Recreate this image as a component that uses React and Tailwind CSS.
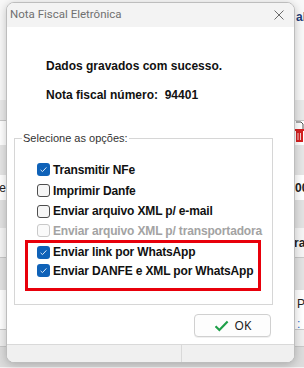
import React from 'react'

const sans = { fontFamily: '"Liberation Sans", Arial, sans-serif' }

const Box = ({ checked, disabled }) =>
  checked ? (
    <span className="w-[13px] h-[13px] rounded-[3px] bg-[#0f62b8] flex items-center justify-center shrink-0">
      <svg width="9" height="9" viewBox="0 0 9 9">
        <path d="M1.6 4.9 L3.5 6.6 L7.4 2.4" stroke="#dbe9f7" strokeWidth="1" fill="none" />
      </svg>
    </span>
  ) : (
    <span
      className={
        disabled
          ? 'w-[13px] h-[13px] rounded-[3px] border border-[#c9c9c9] bg-[#fafafa] shrink-0'
          : 'w-[13px] h-[13px] rounded-[3px] border border-[#4d4d4d] bg-[#f6f6f6] shrink-0'
      }
    />
  )

const Option = ({ label, checked, disabled, h }) => (
  <div className={`flex items-center gap-[3px] ${h}`}>
    <Box checked={checked} disabled={disabled} />
    <span
      className={
        disabled
          ? 'text-[12px] font-bold text-[#a3a3a3] whitespace-nowrap tracking-[-0.15px]'
          : 'text-[12px] font-bold text-[#111] whitespace-nowrap tracking-[-0.15px]'
      }
    >
      {label}
    </span>
  </div>
)

const BgRow = ({ className, left, right }) => (
  <div className={`flex justify-between items-center text-[12px] ${className}`}>
    <span className="w-[6px] overflow-hidden flex justify-end">{left}</span>
    <span className="w-[10px] overflow-hidden">{right}</span>
  </div>
)

export default function App() {
  return (
    <div className="relative w-[304px] h-[368px] overflow-hidden bg-[#f3f3f3]" style={sans}>
      {/* application behind the dialog */}
      <div className="flex flex-col">
        <BgRow
          className="h-[100px] bg-[#f8f8f8] items-start pt-[8px]"
          right={<span className="font-bold text-[#1f3f7a] pl-[2px]">al</span>}
        />
        <BgRow className="h-[21px] bg-[#e9e9e9] border-b border-[#c8c8c8]" />
        <BgRow
          className="h-[24px] bg-white"
          right={
            <svg width="10" height="24" viewBox="0 0 10 24">
              <path d="M2 1 H7 L9 3 V8" stroke="#555" fill="none" />
              <rect x="2" y="10" width="7" height="11" fill="#d42020" />
              <path d="M4 12 V19 M6.5 12 V19" stroke="#fff" strokeWidth="0.8" />
              <rect x="1" y="8" width="9" height="2" fill="#d42020" />
            </svg>
          }
        />
        <BgRow className="h-[30px] bg-[#e6e6e6]" />
        <BgRow
          className="h-[25px] bg-white"
          left={<span className="text-[#222]">De</span>}
          right={<span className="font-bold text-[#222] pl-[1px]">00</span>}
        />
        <BgRow className="h-[28px] bg-[#e2e2e2]" />
        <BgRow
          className="h-[30px] bg-[#f5f5f5] border-b border-[#c8c8c8]"
          right={<span className="font-bold text-[#222]">ra</span>}
        />
        <BgRow className="h-[32px] bg-[#e3e3e3]" />
        <BgRow
          className="h-[28px] bg-white"
          right={<span className="block border-l border-[#bbb] pl-[2px] text-[#222]">P</span>}
        />
        <BgRow
          className="h-[12px] bg-white border-b border-[#c8c8c8]"
          right={<span className="text-[#2a6bd1] pl-[3px]">:</span>}
        />
        <BgRow className="h-[17px] bg-[#eeeeee] border-b border-[#c8c8c8]" />
        <BgRow className="h-[20px] bg-[#dcdcdc]" />
      </div>

      {/* dialog window */}
      <div className="absolute left-[6px] top-[2px] w-[289px] h-[361px] rounded-[8px] border border-[#bdbdbd] bg-white overflow-hidden flex flex-col shadow-[0_2px_10px_rgba(0,0,0,0.22)]">
        <div className="h-[24px] shrink-0 bg-[#f3f3f3] flex items-center justify-between pl-[3px] pr-[10px]">
          <span
            className="text-[11.5px] text-[#707070]"
            style={{ fontFamily: 'Roboto, "Noto Sans", sans-serif' }}
          >
            Nota Fiscal Eletrônica
          </span>
          <svg width="10" height="10" viewBox="0 0 10 10">
            <path d="M0.5 0.5 L9.5 9.5 M9.5 0.5 L0.5 9.5" stroke="#6a6a6a" strokeWidth="1" />
          </svg>
        </div>

        <div className="flex-1 flex flex-col">
          <div className="pl-[39px] pt-[32px] text-[12px] font-bold text-[#111] leading-[14px]">
            <p>Dados gravados com sucesso.</p>
            <p className="mt-[15px] whitespace-pre">Nota fiscal número:  94401</p>
          </div>

          <fieldset className="ml-[7px] mt-[30px] w-[259px] border border-[#d6d6d6] pb-[13px]">
            <legend className="ml-[7px] px-[1px] text-[11px] leading-[13px] text-[#333]">
              Selecione as opções:
            </legend>
            <div className="flex flex-col pt-[14px] pl-[22px]">
              <Option label="Transmitir NFe" checked h="h-[21px]" />
              <Option label="Imprimir Danfe" h="h-[21px]" />
              <Option label="Enviar arquivo XML p/ e-mail" h="h-[20px]" />
              <Option label="Enviar arquivo XML p/ transportadora" disabled h="h-[19px]" />
            </div>
            <div className="ml-[10px] w-[236px] border-[3px] border-[#e8000b] pl-[9px] pb-[8px] flex flex-col">
              <Option label="Enviar link por WhatsApp" checked h="h-[18px]" />
              <Option label="Enviar DANFE e XML por WhatsApp" checked h="h-[19px]" />
            </div>
          </fieldset>

          <div className="flex justify-end pr-[23px] mt-[9px]">
            <button
              className="w-[77px] h-[23px] rounded-[4px] border border-[#d0d0d0] bg-[#fdfdfd] flex items-center justify-center gap-[6px] shadow-[0_1px_0_rgba(0,0,0,0.06)]"
              style={{ fontFamily: '"Noto Sans", "Open Sans", sans-serif' }}
            >
              <svg width="15" height="12" viewBox="0 0 15 12">
                <path d="M1.5 6.2 L5.4 10 L13.6 1.6" stroke="#20a04a" strokeWidth="2.2" fill="none" />
              </svg>
              <span className="text-[12px] text-[#1a1a1a]">OK</span>
            </button>
          </div>
        </div>

        <div className="h-[18px] shrink-0 bg-[#f0f0f0] border-t border-[#d9d9d9] flex">
          <div className="w-[175px] border-r border-[#d9d9d9]" />
          <div className="flex-1" />
        </div>
      </div>
    </div>
  )
}
